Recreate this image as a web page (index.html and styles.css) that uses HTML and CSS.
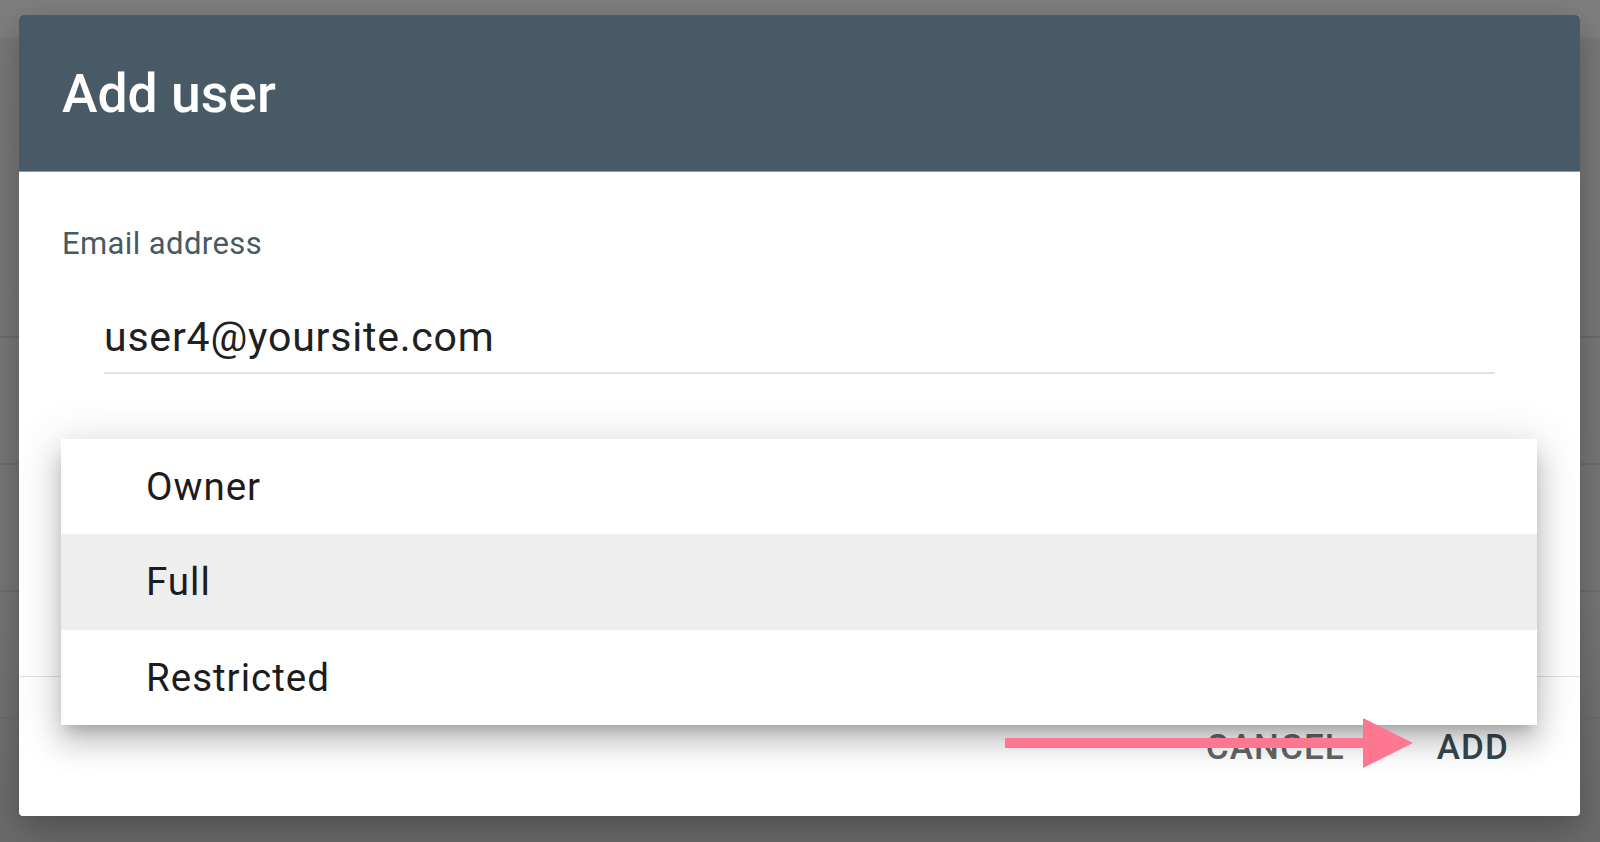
FILE: index.html
```html
<!DOCTYPE html>
<html lang="en">
<head>
<meta charset="utf-8">
<title>Add user</title>
<link rel="stylesheet" href="styles.css">
</head>
<body>
<div class="backdrop">
  <div class="bd-top"></div>
  <div class="bd-row bd-first"></div>
  <div class="bd-row"></div>
  <div class="bd-row"></div>
  <div class="bd-row"></div>
  <div class="bd-rest"></div>
</div>

<div class="dialog">
  <header class="dialog-header">
    <h1 class="dialog-title">Add user</h1>
  </header>
  <div class="dialog-body">
    <label class="field-label">Email address</label>
    <div class="field-input">user4@yoursite.com</div>
  </div>
  <footer class="dialog-footer">
    <button class="btn btn-cancel">CANCEL</button>
    <button class="btn btn-add">ADD</button>
  </footer>

  <ul class="menu">
    <li class="menu-item">Owner</li>
    <li class="menu-item is-active">Full</li>
    <li class="menu-item">Restricted</li>
  </ul>
</div>

<svg class="arrow" width="420" height="60" viewBox="0 0 420 60" aria-hidden="true">
  <rect x="5" y="23" width="360" height="10" fill="#fe7791"/>
  <polygon points="363,3 413,28 363,53" fill="#fe7791"/>
</svg>
</body>
</html>
```

FILE: styles.css
```css
* { box-sizing: border-box; }

html, body {
  margin: 0;
  padding: 0;
}

body {
  width: 1600px;
  height: 842px;
  overflow: hidden;
  position: relative;
  background: #777777;
  font-family: Roboto, "Liberation Sans", Arial, sans-serif;
}

/* dimmed page behind the modal */
.backdrop {
  display: flex;
  flex-direction: column;
  height: 100%;
  background: linear-gradient(to bottom, #787878 0%, #767676 70%, #6a6a6a 100%);
}
.bd-top {
  height: 38px;
  background: #7e7e7e;
  flex: none;
}
.bd-row {
  height: 127px;
  border-bottom: 2px solid #6c6c6c;
  flex: none;
}
.bd-first {
  height: 300px;
}
.bd-rest {
  flex: 1;
}

/* dialog */
.dialog {
  position: absolute;
  left: 19px;
  top: 15px;
  width: 1561px;
  height: 801px;
  background: #ffffff;
  border-radius: 4px;
  display: flex;
  flex-direction: column;
  box-shadow: 0 12px 34px rgba(0, 0, 0, 0.28);
}

.dialog-header {
  height: 157px;
  flex: none;
  background: #485a65;
  border-radius: 4px 4px 0 0;
  display: flex;
  align-items: center;
  padding-left: 43px;
  border-bottom: 1px solid #8f9ba2;
}

.dialog-title {
  margin: 0;
  color: #ffffff;
  font-size: 53.5px;
  font-weight: 500;
  line-height: 1;
  padding-top: 2px;
}

.dialog-body {
  height: 504px;
  flex: none;
  padding: 56px 85px 0 43px;
}

.field-label {
  display: block;
  font-size: 31px;
  line-height: 31px;
  letter-spacing: 0.4px;
  color: #455a64;
}

.field-input {
  margin-top: 58px;
  margin-left: 42px;
  font-size: 41px;
  line-height: 41px;
  letter-spacing: 0.8px;
  color: #202020;
  padding-bottom: 14px;
  border-bottom: 2px solid #e2e2e2;
}

.dialog-footer {
  flex: 1;
  border-top: 1px solid #e0e0e0;
  display: flex;
  align-items: center;
  justify-content: flex-end;
  gap: 92px;
  padding-right: 71px;
  padding-top: 2px;
}

.btn {
  font-family: Roboto, "Liberation Sans", Arial, sans-serif;
  background: none;
  border: 0;
  padding: 0;
  margin: 0;
  font-size: 35px;
  font-weight: 500;
  letter-spacing: 1.1px;
  line-height: 1;
}
.btn-cancel { color: #646464; }
.btn-add { color: #37474f; }

/* dropdown overlay */
.menu {
  position: absolute;
  left: 42px;
  top: 424px;
  width: 1476px;
  margin: 0;
  padding: 0;
  list-style: none;
  background: #ffffff;
  box-shadow:
    0 18px 26px 2px rgba(0, 0, 0, 0.14),
    0 6px 40px 6px rgba(0, 0, 0, 0.12),
    0 10px 14px -6px rgba(0, 0, 0, 0.2);
}

.menu-item {
  height: 95.3px;
  display: flex;
  align-items: center;
  padding-left: 85px;
  font-size: 38.5px;
  letter-spacing: 1px;
  color: #1c1c1c;
}
.menu-item.is-active {
  background: #eeeeee;
}

/* annotation arrow */
.arrow {
  position: absolute;
  left: 1000px;
  top: 715px;
}
```
